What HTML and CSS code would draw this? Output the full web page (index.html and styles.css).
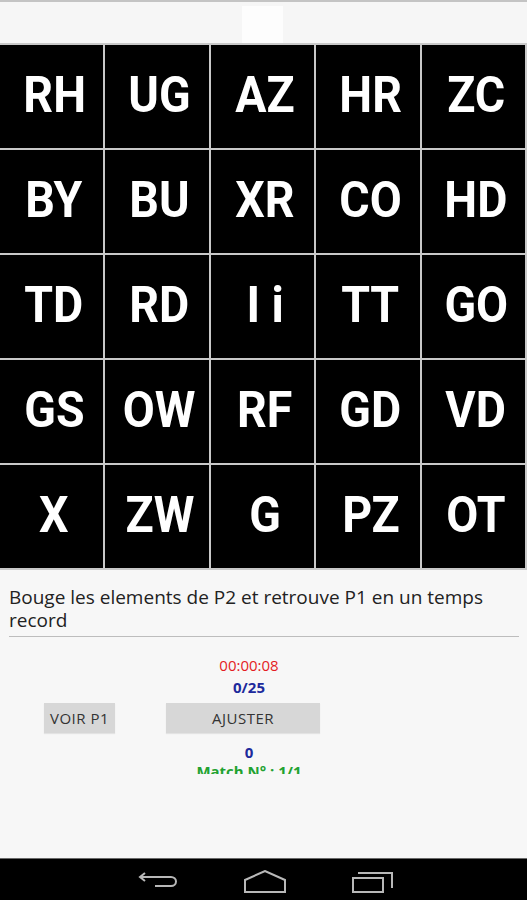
FILE: index.html
```html
<!DOCTYPE html>
<html lang="fr">
<head>
<meta charset="utf-8">
<title>P1 / P2</title>
<link rel="stylesheet" href="styles.css">
</head>
<body>
<div class="screen">
  <div class="topbar"><div class="topbar-tab"></div></div>
  <div class="grid">
    <div class="cell"><span>RH</span></div><div class="cell"><span>UG</span></div><div class="cell"><span>AZ</span></div><div class="cell"><span>HR</span></div><div class="cell"><span>ZC</span></div>
    <div class="cell"><span>BY</span></div><div class="cell"><span>BU</span></div><div class="cell"><span>XR</span></div><div class="cell"><span>CO</span></div><div class="cell"><span>HD</span></div>
    <div class="cell"><span>TD</span></div><div class="cell"><span>RD</span></div><div class="cell"><span>I i</span></div><div class="cell"><span>TT</span></div><div class="cell"><span>GO</span></div>
    <div class="cell"><span>GS</span></div><div class="cell"><span>OW</span></div><div class="cell"><span>RF</span></div><div class="cell"><span>GD</span></div><div class="cell"><span>VD</span></div>
    <div class="cell"><span>X</span></div><div class="cell"><span>ZW</span></div><div class="cell"><span>G</span></div><div class="cell"><span>PZ</span></div><div class="cell"><span>OT</span></div>
  </div>
  <p class="instructions">Bouge les elements de P2 et retrouve P1 en un temps record</p>
  <div class="controls">
    <div class="col">
      <div class="timer">00:00:08</div>
      <div class="score">0/25</div>
    </div>
    <div class="buttons">
      <div class="btn btn-voir">VOIR P1</div>
      <div class="btn btn-ajuster">AJUSTER</div>
    </div>
    <div class="col">
      <div class="count">0</div>
      <div class="match">Match N° : 1/1</div>
    </div>
  </div>
  <div class="spacer"></div>
  <div class="navbar">
    <svg class="nav-icon" width="40" height="24" viewBox="0 0 40 24">
      <path d="M7 3 L2 7 L7 11 M2 7 H33 A5 4.5 0 0 1 33 16 H17" fill="none" stroke="#b8b8b8" stroke-width="2"/>
    </svg>
    <svg class="nav-icon" width="42" height="24" viewBox="0 0 42 24">
      <path d="M1 22 V10 L21 1 L41 10 V22 Z" fill="none" stroke="#b8b8b8" stroke-width="2"/>
    </svg>
    <svg class="nav-icon" width="42" height="24" viewBox="0 0 42 24">
      <rect x="1" y="8" width="30" height="14" fill="none" stroke="#b8b8b8" stroke-width="2"/>
      <path d="M6 3 H40 V18" fill="none" stroke="#b8b8b8" stroke-width="2"/>
    </svg>
  </div>
</div>
</body>
</html>
```
FILE: styles.css
```css
html, body {
  margin: 0;
  padding: 0;
}
body {
  background: #f7f7f7;
  font-family: "Open Sans", Roboto, "Liberation Sans", sans-serif;
}
.screen {
  width: 527px;
  height: 900px;
  display: flex;
  flex-direction: column;
  overflow: hidden;
}
.topbar {
  height: 41px;
  border-top: 2px solid #c4c4c4;
  background: #f6f6f6;
  display: flex;
  justify-content: flex-start;
  padding-left: 242px;
}
.topbar-tab {
  width: 41px;
  margin-top: 4px;
  background: #fdfdfd;
}
.grid {
  height: 523px;
  padding: 2px 2px 2px 0;
  background: #c9c9c9;
  display: grid;
  grid-template-columns: repeat(5, 1fr);
  grid-template-rows: repeat(5, 1fr);
  gap: 2px;
}
.cell {
  background: #000;
  color: #fff;
  font-family: Roboto, "Liberation Sans", sans-serif;
  font-weight: bold;
  font-size: 50px;
  display: flex;
  align-items: center;
  justify-content: center;
  padding-left: 5px;
  padding-bottom: 4px;
  white-space: pre;
}
.cell span {
  display: inline-block;
  transform: scaleX(0.93);
}
.instructions {
  margin: 16px 8px 0 9px;
  padding-bottom: 4px;
  border-bottom: 1px solid #bdbdbd;
  font-size: 19px;
  line-height: 23px;
  color: #222;
}
.controls {
  height: 137px;
  overflow: hidden;
  padding-top: 20px;
  box-sizing: border-box;
  font-size: 15px;
  line-height: 16px;
}
.col {
  width: 498px;
  text-align: center;
}
.timer {
  color: #e41b23;
}
.score {
  margin-top: 6px;
  color: #1d2a9c;
  font-weight: bold;
}
.buttons {
  margin-top: 8px;
  display: flex;
  padding-left: 44px;
  gap: 51px;
}
.btn {
  height: 30px;
  line-height: 30px;
  background: #d7d7d7;
  color: #333;
  font-size: 15px;
  letter-spacing: 0.5px;
  text-align: center;
  box-shadow: 0 1px 1px rgba(0,0,0,0.08);
}
.btn-voir {
  width: 71px;
}
.btn-ajuster {
  width: 154px;
}
.count {
  margin-top: 11px;
  color: #1d2a9c;
  font-weight: bold;
}
.match {
  margin-top: 3px;
  color: #22a230;
  font-weight: bold;
}
.spacer {
  flex: 1;
}
.navbar {
  border-top: 1px solid #6a6a6a;
  background: #000;
  display: flex;
  align-items: flex-start;
  padding-top: 11px;
  box-sizing: border-box;
  height: 42px;
  padding-left: 138px;
  gap: 66px;
}
.nav-icon {
  display: block;
}
```
